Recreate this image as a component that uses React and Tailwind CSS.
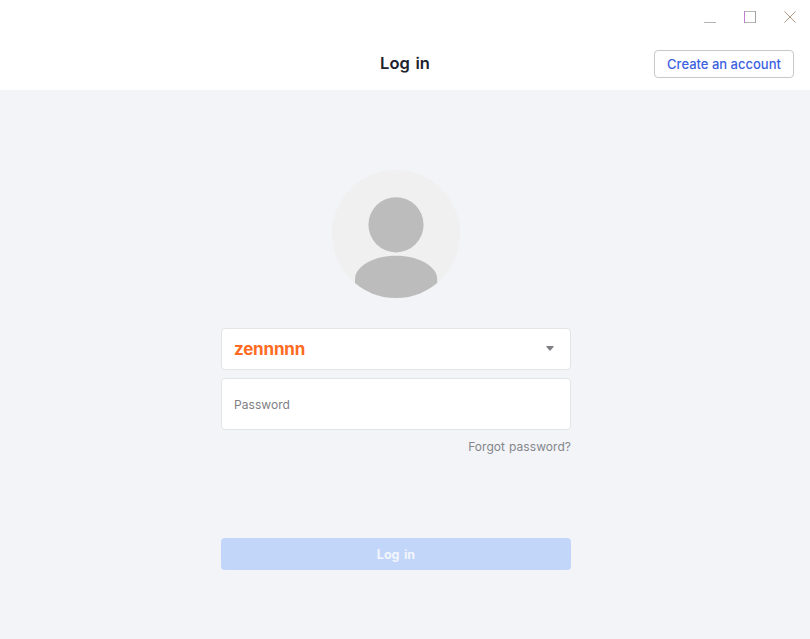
function WindowControls() {
  return (
    <div className="flex h-[35px] justify-end gap-[28px] pr-[14px] pt-[11px]">
      <svg width="12" height="12" viewBox="0 0 12 12" fill="none">
        <path d="M0 11.5H12" stroke="#b4b4b4" />
      </svg>
      <svg width="12" height="12" viewBox="0 0 12 12" fill="none">
        <path d="M0 0.5H12M0 11.5H12" stroke="#b4b4b4" />
        <path d="M0.5 0V12" stroke="#c07fd0" />
        <path d="M11.5 0V12" stroke="#a3a59f" />
      </svg>
      <svg width="12" height="12" viewBox="0 0 12 12" fill="none">
        <path d="M0.4 0.4L11.6 11.6M11.6 0.4L0.4 11.6" stroke="#b09a86" />
      </svg>
    </div>
  );
}

function Avatar() {
  return (
    <svg className="mx-auto block" width="128" height="128" viewBox="0 0 128 128">
      <defs>
        <clipPath id="avatar-circle">
          <circle cx="64" cy="64" r="64" />
        </clipPath>
      </defs>
      <circle cx="64" cy="64" r="64" fill="#f0f0f0" />
      <g clipPath="url(#avatar-circle)" fill="#bcbcbc">
        <circle cx="64" cy="54.8" r="27.6" />
        <path d="M23 128V109C23 96 42 85.7 64 85.7S105.2 96 105.2 109V128Z" />
      </g>
    </svg>
  );
}

export default function App() {
  return (
    <div className="flex h-[639px] w-[810px] flex-col overflow-hidden bg-[#f2f4f8] font-[Inter,sans-serif]">
      <header className="h-[90px] bg-white">
        <WindowControls />
        <div className="grid grid-cols-[1fr_auto_1fr] items-center px-4 pt-[15px]">
          <span />
          <h1 className="pb-0.5 text-[16.5px] leading-[26px] font-semibold [word-spacing:1.5px] text-[#20212b]">Log in</h1>
          <button className="h-7 w-[140px] justify-self-end rounded-[4px] border border-[#c9c9cb] text-[13px] leading-6 font-medium whitespace-nowrap text-[#3c61e0]">
            Create an account
          </button>
        </div>
      </header>

      <main className="ml-[221px] flex w-[350px] flex-col pt-20">
        <Avatar />
        <div className="mt-[30px] flex h-[42px] items-center justify-between rounded-[4px] border border-[#e3e4e6] bg-white pr-4 pl-3">
          <span className="pt-0.5 text-[17px] font-bold tracking-[-0.2px] text-[#ff6b22]">zennnnn</span>
          <svg className="-mt-px" width="8" height="5" viewBox="0 0 8 5">
            <path d="M0.8 0H7.2Q8.2 0 7.5 1L4.7 4.3Q4 5 3.3 4.3L0.5 1Q-0.2 0 0.8 0Z" fill="#7f8084" />
          </svg>
        </div>
        <div className="mt-2 flex h-[52px] items-center rounded-[4px] border border-[#e3e4e6] bg-white px-3 pt-0.5">
          <span className="text-[12px] tracking-[0.05px] text-[#808084]">Password</span>
        </div>
        <a className="mt-[7px] self-end text-[12px] leading-5 tracking-[0.05px] [word-spacing:0.6px] text-[#85868a]">
          Forgot password?
        </a>
        <button className="mt-[81px] h-8 rounded-[4px] bg-[#c2d6f9] pt-0.5 text-[12.5px] font-bold [word-spacing:1.5px] text-[#f3f6fc]">
          Log in
        </button>
      </main>
    </div>
  );
}
